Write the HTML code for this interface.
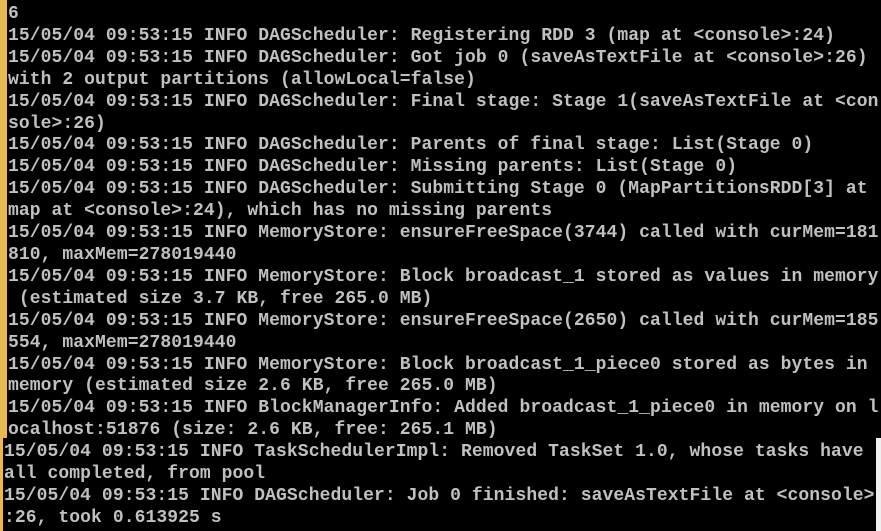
<!DOCTYPE html>
<html><head><meta charset="utf-8"><style>
html,body{margin:0;padding:0;background:#000;width:881px;height:531px;overflow:hidden;position:relative}
.strip{position:absolute;left:0;top:0;width:7px;height:438px;background:#e6b955}
.strip2{position:absolute;left:0;top:438px;width:3px;height:93px;background:#e6b955}
.wr{position:absolute;left:876px;top:438px;width:5px;height:93px;background:#f0f0f0}
pre{position:absolute;margin:0;font-family:"Liberation Mono",monospace;font-weight:bold;font-size:18px;letter-spacing:0.08px;line-height:21.9px;color:#c0c0c0}
</style></head><body>
<div class="strip"></div><div class="strip2"></div><div class="wr"></div>
<pre style="left:8px;top:4px">6
15/05/04 09:53:15 INFO DAGScheduler: Registering RDD 3 (map at &lt;console&gt;:24)
15/05/04 09:53:15 INFO DAGScheduler: Got job 0 (saveAsTextFile at &lt;console&gt;:26)
with 2 output partitions (allowLocal=false)
15/05/04 09:53:15 INFO DAGScheduler: Final stage: Stage 1(saveAsTextFile at &lt;con
sole&gt;:26)
15/05/04 09:53:15 INFO DAGScheduler: Parents of final stage: List(Stage 0)
15/05/04 09:53:15 INFO DAGScheduler: Missing parents: List(Stage 0)
15/05/04 09:53:15 INFO DAGScheduler: Submitting Stage 0 (MapPartitionsRDD[3] at
map at &lt;console&gt;:24), which has no missing parents
15/05/04 09:53:15 INFO MemoryStore: ensureFreeSpace(3744) called with curMem=181
810, maxMem=278019440
15/05/04 09:53:15 INFO MemoryStore: Block broadcast_1 stored as values in memory
 (estimated size 3.7 KB, free 265.0 MB)
15/05/04 09:53:15 INFO MemoryStore: ensureFreeSpace(2650) called with curMem=185
554, maxMem=278019440
15/05/04 09:53:15 INFO MemoryStore: Block broadcast_1_piece0 stored as bytes in
memory (estimated size 2.6 KB, free 265.0 MB)
15/05/04 09:53:15 INFO BlockManagerInfo: Added broadcast_1_piece0 in memory on l
ocalhost:51876 (size: 2.6 KB, free: 265.1 MB)</pre>
<pre style="left:4px;top:442px">15/05/04 09:53:15 INFO TaskSchedulerImpl: Removed TaskSet 1.0, whose tasks have
all completed, from pool
15/05/04 09:53:15 INFO DAGScheduler: Job 0 finished: saveAsTextFile at &lt;console&gt;
:26, took 0.613925 s</pre>
</body></html>
